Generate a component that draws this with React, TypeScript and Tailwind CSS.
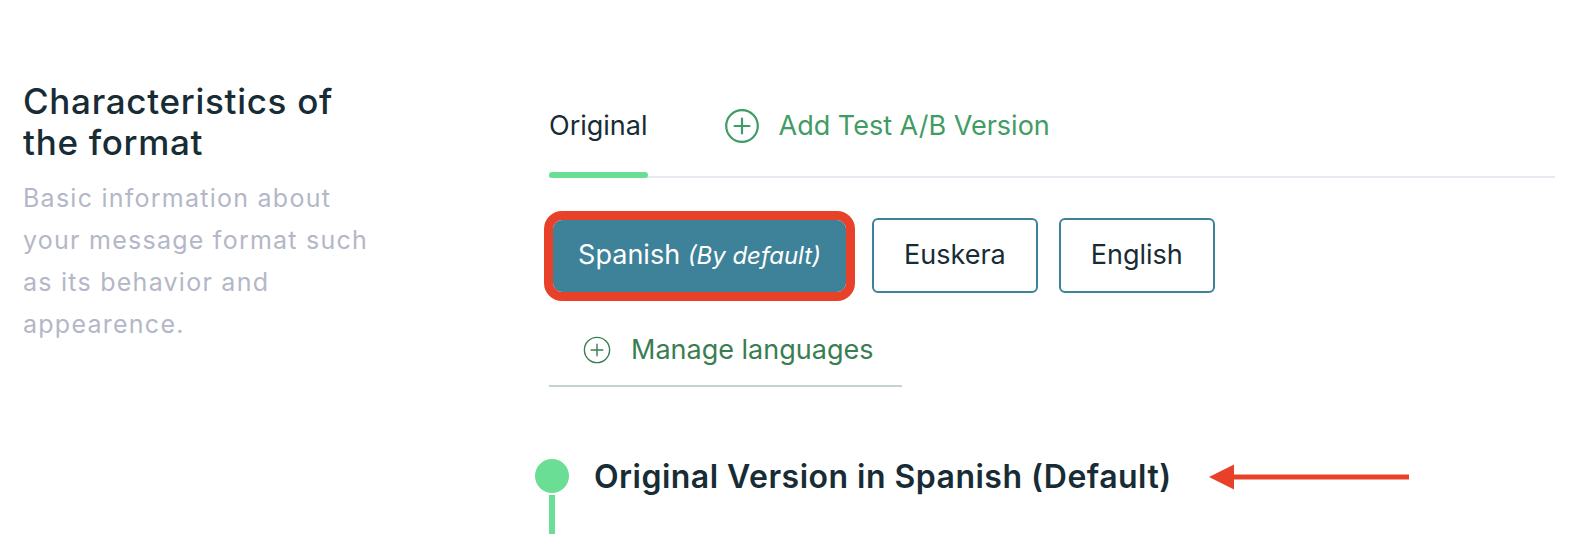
import React, { useState } from 'react';

const languages = ['Euskera', 'English'];

const PlusCircle: React.FC<{ size: number; color: string; stroke?: number }> = ({ size, color, stroke = 2 }) => (
  <svg width={size} height={size} viewBox="0 0 36 36" fill="none">
    <circle cx="18" cy="18" r={18 - stroke} stroke={color} strokeWidth={stroke} />
    <path d="M18 10.5v15M10.5 18h15" stroke={color} strokeWidth={stroke} strokeLinecap="round" />
  </svg>
);

const App: React.FC = () => {
  const [active] = useState('Spanish');

  return (
    <div className="h-[534px] bg-white flex font-['Inter',sans-serif] overflow-hidden">
      {/* left description */}
      <aside className="w-[549px] shrink-0 pl-[23px] pt-[81px]">
        <div className="w-[358px]">
          <h2 className="text-[35px] leading-[41px] font-medium tracking-[0.02em] text-[#172c35]">
            Characteristics of the format
          </h2>
          <p className="mt-[14px] text-[25px] leading-[42px] tracking-[0.05em] text-[#b4b7c7]">
            Basic information about your message format such as its behavior and appearence.
          </p>
        </div>
      </aside>

      {/* right content */}
      <main className="flex-1 pr-[21px] pt-[110px]">
        <div className="flex items-start border-b-2 border-[#e8e9f0]">
          <div className="flex flex-col mb-[-2px]">
            <span className="text-[27px] leading-[32px] text-[#172c35]">Original</span>
            <div className="mt-[30px] h-[6px] rounded-full bg-[#6ade94]" />
          </div>
          <button className="ml-[76px] mt-[-2px] flex items-center gap-[19px] text-[27px] leading-[32px] text-[#3f9c64]">
            <PlusCircle size={36} color="#3f9c64" stroke={2.2} />
            Add Test A/B Version
          </button>
        </div>

        <div className="mt-[40px] flex items-center">
          <button
            className={`ml-[4px] w-[293px] h-[72px] rounded-[9px] bg-[#3e8299] text-white text-[27px] outline-[9px] outline-[#e8412a] ${active === 'Spanish' ? 'outline-solid' : ''}`}
          >
            Spanish <span className="italic text-[24px]">(By default)</span>
          </button>
          <div className="ml-[26px] flex gap-[21px]">
            {languages.map((l) => (
              <button
                key={l}
                className="h-[75px] px-[30px] rounded-[6px] border-2 border-[#3e8299] text-[27px] text-[#172c35]"
              >
                {l}
              </button>
            ))}
          </div>
        </div>

        <div className="mt-[41px] w-[353px] pl-[34px] pb-[19px] border-b-2 border-[#c4d4cc] flex items-center gap-[20px]">
          <PlusCircle size={28} color="#3b7d52" stroke={1.8} />
          <span className="text-[27px] leading-[32px] text-[#3b7d52]">Manage languages</span>
        </div>

        <div className="mt-[72px] ml-[-14px] grid grid-cols-[34px_1fr] gap-x-[25px]">
          <div className="flex flex-col items-center">
            <div className="w-[34px] h-[34px] rounded-full bg-[#6ade94]" />
          </div>
          <div className="flex items-center">
            <h3 className="text-[32px] leading-[36px] font-semibold tracking-[0.015em] text-[#172c35]">
              Original Version in Spanish (Default)
            </h3>
            <svg className="ml-[37px]" width="200" height="26" viewBox="0 0 200 26">
              <path d="M0 13L25 0.5V25.5Z" fill="#e8412a" />
              <rect x="22" y="10.5" width="178" height="5" fill="#e8412a" />
            </svg>
          </div>
          <div className="flex justify-center">
            <div className="w-[6px] h-[39px] bg-[#6ade94]" />
          </div>
        </div>
      </main>
    </div>
  );
};

export default App;
